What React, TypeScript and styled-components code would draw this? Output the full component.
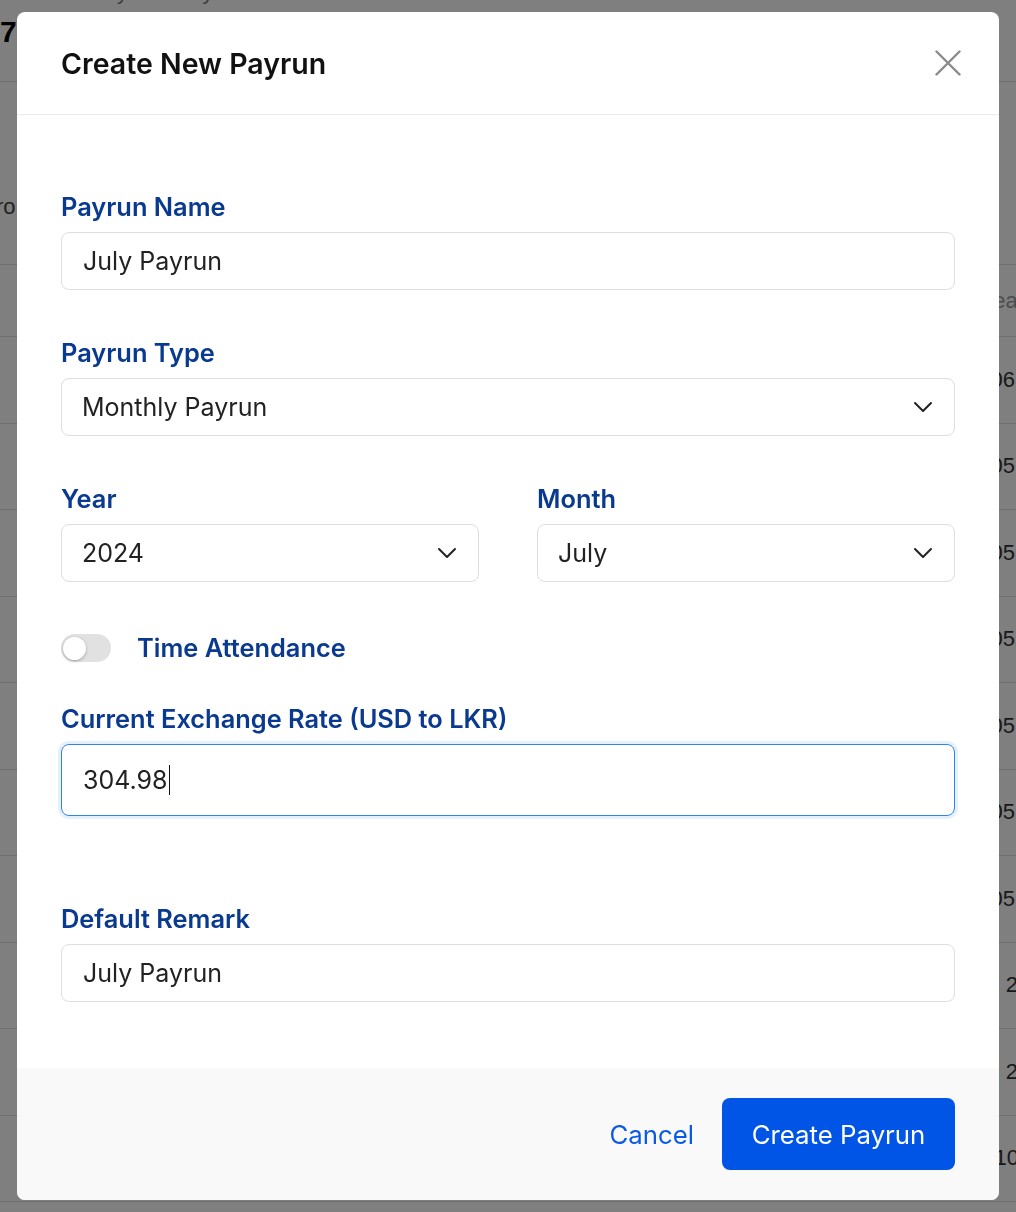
import styled, { createGlobalStyle } from 'styled-components';

const GlobalStyle = createGlobalStyle`
  html, body {
    margin: 0;
    padding: 0;
    background: #fff;
    font-family: Inter, "Liberation Sans", Arial, sans-serif;
  }
  * {
    box-sizing: border-box;
  }
`;

const ROWS = [
  { value: '06', shift: 1 },
  { value: '05', shift: 1 },
  { value: '05', shift: 1 },
  { value: '05', shift: 1 },
  { value: '05', shift: 1 },
  { value: '05', shift: 1 },
  { value: '05', shift: 1 },
  { value: '2,', shift: -8 },
  { value: '2,', shift: -8 },
  { value: '10', shift: -3 },
];

export default function App() {
  return (
    <>
      <GlobalStyle />
      <Page>
        <Crumb>Payroll / Payruns</Crumb>
        <PageTitle>7</PageTitle>
        <FilterBar>
          <EdgeText>Payro</EdgeText>
        </FilterBar>
        <TableHead>
          <span />
          <HeadCell>Year</HeadCell>
        </TableHead>
        {ROWS.map((r, i) => (
          <TableRow key={i}>
            <span />
            <Cell $shift={r.shift}>{r.value}</Cell>
          </TableRow>
        ))}
      </Page>

      <Overlay>
        <Modal>
          <Header>
            <Title>Create New Payrun</Title>
            <CloseButton aria-label="Close">
              <svg width="26" height="26" viewBox="0 0 26 26" fill="none">
                <path
                  d="M1.5 1.5 L24.5 24.5 M24.5 1.5 L1.5 24.5"
                  stroke="#8a8a8a"
                  strokeWidth="2.4"
                  strokeLinecap="round"
                />
              </svg>
            </CloseButton>
          </Header>

          <Body>
            <Field $mb={48}>
              <Label>Payrun Name</Label>
              <Input>July Payrun</Input>
            </Field>

            <Field $mb={48}>
              <Label>Payrun Type</Label>
              <Select>
                Monthly Payrun
                <Chevron />
              </Select>
            </Field>

            <TwoCols>
              <Field $mb={0}>
                <Label>Year</Label>
                <Select>
                  2024
                  <Chevron />
                </Select>
              </Field>
              <Field $mb={0}>
                <Label>Month</Label>
                <Select>
                  July
                  <Chevron />
                </Select>
              </Field>
            </TwoCols>

            <ToggleRow>
              <Switch>
                <Knob />
              </Switch>
              <Label as="span">Time Attendance</Label>
            </ToggleRow>

            <Field $mb={88}>
              <Label>Current Exchange Rate (USD to LKR)</Label>
              <Input $focused>
                304.98
                <Caret />
              </Input>
            </Field>

            <Field $mb={0}>
              <Label>Default Remark</Label>
              <Input>July Payrun</Input>
            </Field>
          </Body>

          <Footer>
            <TextButton>Cancel</TextButton>
            <PrimaryButton>Create Payrun</PrimaryButton>
          </Footer>
        </Modal>
      </Overlay>
    </>
  );
}

function Chevron() {
  return (
    <svg width="20" height="12" viewBox="0 0 20 12" fill="none">
      <path
        d="M2 2 L10 10 L18 2"
        stroke="#222"
        strokeWidth="2"
        strokeLinecap="round"
        strokeLinejoin="round"
      />
    </svg>
  );
}

/* background page */

const Page = styled.div`
  width: 1016px;
  height: 1212px;
  overflow: hidden;
  color: #222;
  font-family: "Liberation Sans", Arial, sans-serif;
`;

const Crumb = styled.div`
  margin-top: -22px;
  padding-left: 90px;
  font-size: 22px;
  line-height: 28px;
  color: #777;
`;

const PageTitle = styled.div`
  height: 76px;
  padding-top: 6px;
  font-size: 30px;
  font-weight: 700;
  line-height: 40px;
  color: #000;
  border-bottom: 1px solid #ddd;
`;

const FilterBar = styled.div`
  height: 183px;
  display: flex;
  align-items: flex-end;
  padding-bottom: 44px;
  border-bottom: 1px solid #ddd;
`;

const EdgeText = styled.span`
  margin-left: -42px;
  font-size: 22px;
  color: #444;
`;

const TableHead = styled.div`
  height: 72px;
  display: grid;
  grid-template-columns: 1fr auto;
  align-items: center;
  border-bottom: 1px solid #ddd;
`;

const HeadCell = styled.span`
  margin-right: -9px;
  font-size: 22px;
  color: #999;
`;

const TableRow = styled.div`
  height: 86.5px;
  display: grid;
  grid-template-columns: 1fr auto;
  align-items: center;
  border-bottom: 1px solid #ddd;
`;

const Cell = styled.span<{ $shift: number }>`
  margin-right: ${(p) => p.$shift}px;
  font-size: 22px;
  color: #333;
`;

/* modal */

const Overlay = styled.div`
  position: fixed;
  inset: 0;
  background: rgba(0, 0, 0, 0.5);
`;

const Modal = styled.div`
  position: absolute;
  left: 17px;
  top: 12px;
  width: 982px;
  height: 1188px;
  background: #fff;
  border-radius: 8px;
  overflow: hidden;
  display: flex;
  flex-direction: column;
`;

const Header = styled.div`
  height: 103px;
  flex: none;
  display: flex;
  align-items: center;
  justify-content: space-between;
  padding: 0 38px 0 44px;
  border-bottom: 1px solid #ececec;
`;

const Title = styled.h2`
  margin: 0;
  font-size: 28.5px;
  font-weight: 600;
  color: #111;
`;

const CloseButton = styled.button`
  border: 0;
  background: none;
  padding: 0;
  display: flex;
  cursor: pointer;
`;

const Body = styled.div`
  flex: 1;
  padding: 77px 44px 0 44px;
`;

const Field = styled.div<{ $mb: number }>`
  display: flex;
  flex-direction: column;
  gap: 11px;
  margin-bottom: ${(p) => p.$mb}px;
`;

const Label = styled.label`
  font-size: 25.4px;
  font-weight: 600;
  line-height: 29px;
  color: #0a3a8f;
`;

const Input = styled.div<{ $focused?: boolean }>`
  height: ${(p) => (p.$focused ? 72 : 58)}px;
  display: flex;
  align-items: center;
  padding: 0 21px;
  font-size: 25px;
  color: #222;
  background: #fff;
  border: 1px solid ${(p) => (p.$focused ? '#2f86f0' : '#dedede')};
  border-radius: 8px;
  box-shadow: ${(p) => (p.$focused ? '0 0 0 3px rgba(47, 134, 240, 0.12)' : 'none')};
`;

const Caret = styled.span`
  display: inline-block;
  width: 1.5px;
  height: 30px;
  margin-left: 1px;
  background: #111;
`;

const Select = styled(Input)`
  justify-content: space-between;
  padding: 0 21px 0 20px;
`;

const TwoCols = styled.div`
  display: grid;
  grid-template-columns: 1fr 1fr;
  column-gap: 58px;
`;

const ToggleRow = styled.div`
  display: flex;
  align-items: center;
  gap: 26px;
  margin: 51px 0 42px;
`;

const Switch = styled.div`
  width: 50px;
  height: 28px;
  border-radius: 14px;
  background: #e1e1e1;
  padding: 3px 2px;
  display: flex;
`;

const Knob = styled.div`
  width: 23px;
  height: 23px;
  border-radius: 50%;
  background: #fff;
  box-shadow: 0 1px 3px rgba(0, 0, 0, 0.3);
`;

const Footer = styled.div`
  height: 132px;
  flex: none;
  display: flex;
  align-items: center;
  justify-content: flex-end;
  gap: 28px;
  padding: 0 44px;
  background: #f9f9f9;
`;

const TextButton = styled.button`
  border: 0;
  background: none;
  padding: 0;
  font-family: inherit;
  font-size: 25.8px;
  color: #0a5ae6;
  cursor: pointer;
`;

const PrimaryButton = styled.button`
  width: 233px;
  height: 72px;
  border: 0;
  border-radius: 8px;
  background: #0055e6;
  color: #fff;
  font-family: inherit;
  font-size: 25.8px;
  cursor: pointer;
`;
